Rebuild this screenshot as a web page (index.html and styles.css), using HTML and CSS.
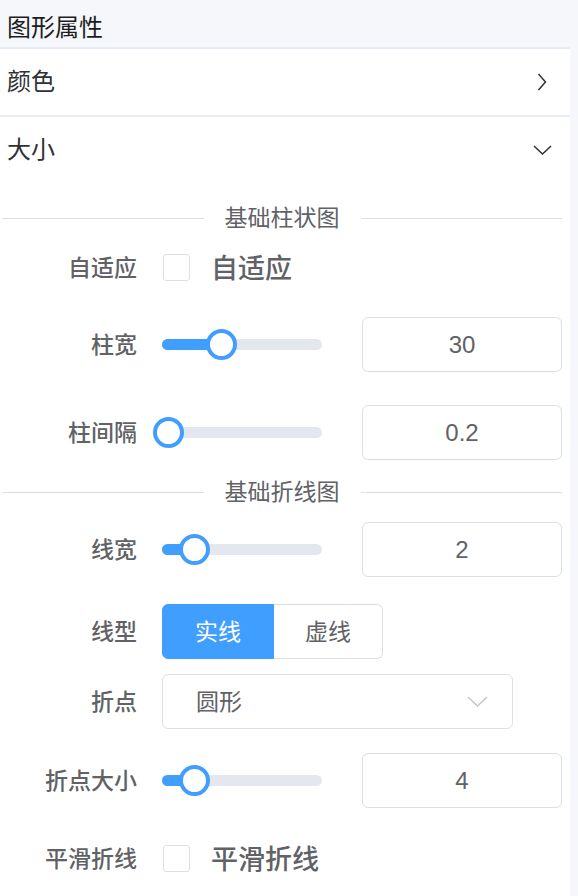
FILE: index.html
```html
<!DOCTYPE html>
<html>
<head>
  <title>图形属性</title>
  <link rel="stylesheet" href="styles.css">
</head>
<body>
  <!-- Panel title -->
  <div class="panel-header">图形属性</div>

  <div class="collapse">
    <div class="collapse-head">
      <span class="collapse-title">颜色</span>
      <svg class="arrow" width="10" height="18" viewBox="0 0 10 18"><path d="M1.5 1 L8.5 9 L1.5 17" fill="none" stroke="#303133" stroke-width="1.5"/></svg>
    </div>

    <div class="collapse-head open">
      <span class="collapse-title">大小</span>
      <svg class="arrow" width="19" height="10" viewBox="0 0 19 10"><path d="M1 1 L9.5 9 L18 1" fill="none" stroke="#303133" stroke-width="1.5"/></svg>
    </div>

    <div class="collapse-content">
      <div class="divider"><span class="divider-text">基础柱状图</span></div>

      <div class="form-item mt-10">
        <label class="form-label">自适应</label>
        <span class="checkbox"></span>
        <span class="checkbox-text">自适应</span>
      </div>

      <div class="form-item mt-22">
        <label class="form-label">柱宽</label>
        <div class="slider">
          <div class="slider-bar" style="width: 37%"></div>
          <div class="slider-thumb" style="left: 37%"></div>
        </div>
        <input class="num-input" type="text" value="30">
      </div>

      <div class="form-item mt-33">
        <label class="form-label">柱间隔</label>
        <div class="slider">
          <div class="slider-bar" style="width: 4%"></div>
          <div class="slider-thumb" style="left: 4%"></div>
        </div>
        <input class="num-input" type="text" value="0.2">
      </div>

      <div class="divider mt-20"><span class="divider-text">基础折线图</span></div>

      <div class="form-item mt-18">
        <label class="form-label">线宽</label>
        <div class="slider">
          <div class="slider-bar" style="width: 20%"></div>
          <div class="slider-thumb" style="left: 20%"></div>
        </div>
        <input class="num-input" type="text" value="2">
      </div>

      <div class="form-item mt-27">
        <label class="form-label">线型</label>
        <div class="radio-group">
          <span class="radio-btn active">实线</span>
          <span class="radio-btn">虚线</span>
        </div>
      </div>

      <div class="form-item mt-15">
        <label class="form-label">折点</label>
        <div class="select">
          <span class="select-text">圆形</span>
          <svg width="21" height="11" viewBox="0 0 21 11"><path d="M1 1 L10.5 10 L20 1" fill="none" stroke="#c0c4cc" stroke-width="1.3"/></svg>
        </div>
      </div>

      <div class="form-item mt-24">
        <label class="form-label">折点大小</label>
        <div class="slider">
          <div class="slider-bar" style="width: 20%"></div>
          <div class="slider-thumb" style="left: 20%"></div>
        </div>
        <input class="num-input" type="text" value="4">
      </div>

      <div class="form-item mt-23">
        <label class="form-label">平滑折线</label>
        <span class="checkbox"></span>
        <span class="checkbox-text">平滑折线</span>
      </div>
    </div>
  </div>
</body>
</html>
```

FILE: styles.css
```css
body {
  margin: 0;
  padding: 0;
  background-color: #f5f7fa;
  font-family: "Liberation Sans", "Noto Sans CJK SC", sans-serif;
  color: #303133;
}

.panel-header {
  height: 47px;
  line-height: 55px;
  padding-left: 7px;
  font-size: 24px;
  color: #1d1d1f;
}

.collapse {
  width: 570px;
  background-color: white;
  border-top: 2px solid #e6ebf5;
  height: 847px;
}

.collapse-head {
  display: flex;
  align-items: center;
  justify-content: space-between;
  height: 66px;
  padding: 0 23px 0 7px;
  font-size: 24px;
  color: #303133;
  border-bottom: 2px solid #e6ebf5;
}

.collapse-head.open {
  border-bottom-color: transparent;
  padding-right: 18px;
}

.collapse-title {
  margin-bottom: 5px;
}

.collapse-content {
  padding: 0 8px 0 2px;
}

.divider {
  display: flex;
  align-items: center;
  height: 24px;
  margin-top: 21px;
}

.divider::before, .divider::after {
  content: "";
  flex: 1;
  height: 1px;
  background-color: #dcdfe6;
}

.divider-text {
  padding: 0 21px 4px;
  font-size: 23px;
  color: #606266;
}

.form-item {
  display: flex;
  align-items: center;
  height: 55px;
}

.mt-10 { margin-top: 10px; }
.mt-15 { margin-top: 15px; }
.mt-18 { margin-top: 18px; }
.mt-20 { margin-top: 20px; }
.mt-22 { margin-top: 22px; }
.mt-23 { margin-top: 23px; }
.mt-24 { margin-top: 24px; }
.mt-27 { margin-top: 27px; }
.mt-33 { margin-top: 33px; }

.form-label {
  width: 135px;
  margin-right: 25px;
  padding-bottom: 4px;
  text-align: right;
  font-size: 23px;
  font-weight: 500;
  color: #606266;
}

.checkbox {
  box-sizing: border-box;
  width: 27px;
  height: 27px;
  margin-left: 1px;
  border: 1.5px solid #dcdfe6;
  border-radius: 3px;
  background-color: white;
}

.checkbox-text {
  margin-left: 21px;
  padding-bottom: 3px;
  font-size: 27px;
  font-weight: 500;
  color: #606266;
}

.slider {
  position: relative;
  width: 160px;
  height: 11px;
  border-radius: 6px;
  background-color: #e4e7ed;
}

.slider-bar {
  height: 100%;
  border-radius: 6px;
  background-color: #409eff;
}

.slider-thumb {
  position: absolute;
  top: 50%;
  box-sizing: border-box;
  width: 31px;
  height: 31px;
  margin: -15.5px 0 0 -15.5px;
  border: 4px solid #409eff;
  border-radius: 50%;
  background-color: white;
}

.num-input {
  box-sizing: border-box;
  width: 200px;
  height: 55px;
  margin-left: 40px;
  border: 1.5px solid #dcdfe6;
  border-radius: 6px;
  text-align: center;
  font-family: "Liberation Sans", sans-serif;
  font-size: 24px;
  color: #606266;
  outline: none;
}

.radio-group {
  display: flex;
  height: 55px;
}

.radio-btn {
  box-sizing: border-box;
  display: flex;
  align-items: center;
  justify-content: center;
  height: 55px;
  padding-bottom: 3px;
  font-size: 23px;
  color: #606266;
  border: 1.5px solid #dcdfe6;
  background-color: white;
}

.radio-btn.active {
  width: 112px;
  color: white;
  background-color: #409eff;
  border-color: #409eff;
  border-radius: 6px 0 0 6px;
}

.radio-btn:last-child {
  width: 109px;
  border-left: none;
  border-radius: 0 6px 6px 0;
}

.select {
  box-sizing: border-box;
  display: flex;
  align-items: center;
  justify-content: space-between;
  width: 351px;
  height: 55px;
  padding: 0 24px 0 33px;
  border: 1.5px solid #dcdfe6;
  border-radius: 6px;
  font-size: 23px;
  color: #606266;
}

.select-text {
  padding-bottom: 4px;
}
```
